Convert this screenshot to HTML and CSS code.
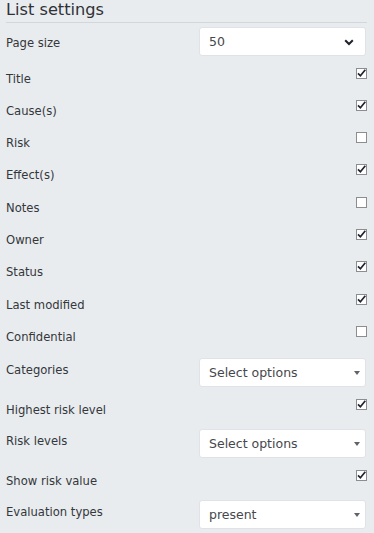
FILE: index.html
```html
<!DOCTYPE html>
<html>
<head>
<meta charset="utf-8">
<link rel="stylesheet" href="styles.css">
</head>
<body>
<div class="panel">
  <h2 class="title">List settings</h2>

  <div class="row row-select row-first">
    <span class="label label-page">Page size</span>
    <div class="select">
      <span class="select-text">50</span>
      <svg class="chevron" width="10" height="7" viewBox="0 0 10 7"><path d="M1.2 1.3 L5 5 L8.8 1.3" fill="none" stroke="#1f2329" stroke-width="2"/></svg>
    </div>
  </div>

  <div class="row row-check"><span class="label">Title</span><span class="cb on"><svg viewBox="0 0 11 11"><path d="M2 5.3 L4.4 7.8 L9.3 1.8" fill="none" stroke="#1d2430" stroke-width="1.7"/></svg></span></div>
  <div class="row row-check"><span class="label">Cause(s)</span><span class="cb on"><svg viewBox="0 0 11 11"><path d="M2 5.3 L4.4 7.8 L9.3 1.8" fill="none" stroke="#1d2430" stroke-width="1.7"/></svg></span></div>
  <div class="row row-check"><span class="label">Risk</span><span class="cb"></span></div>
  <div class="row row-check"><span class="label">Effect(s)</span><span class="cb on"><svg viewBox="0 0 11 11"><path d="M2 5.3 L4.4 7.8 L9.3 1.8" fill="none" stroke="#1d2430" stroke-width="1.7"/></svg></span></div>
  <div class="row row-check"><span class="label">Notes</span><span class="cb"></span></div>
  <div class="row row-check"><span class="label">Owner</span><span class="cb on"><svg viewBox="0 0 11 11"><path d="M2 5.3 L4.4 7.8 L9.3 1.8" fill="none" stroke="#1d2430" stroke-width="1.7"/></svg></span></div>
  <div class="row row-check"><span class="label">Status</span><span class="cb on"><svg viewBox="0 0 11 11"><path d="M2 5.3 L4.4 7.8 L9.3 1.8" fill="none" stroke="#1d2430" stroke-width="1.7"/></svg></span></div>
  <div class="row row-check"><span class="label">Last modified</span><span class="cb on"><svg viewBox="0 0 11 11"><path d="M2 5.3 L4.4 7.8 L9.3 1.8" fill="none" stroke="#1d2430" stroke-width="1.7"/></svg></span></div>
  <div class="row row-check"><span class="label">Confidential</span><span class="cb"></span></div>

  <div class="row row-select">
    <span class="label">Categories</span>
    <div class="select">
      <span class="select-text">Select options</span>
      <span class="caret"></span>
    </div>
  </div>

  <div class="row row-check tight"><span class="label">Highest risk level</span><span class="cb on"><svg viewBox="0 0 11 11"><path d="M2 5.3 L4.4 7.8 L9.3 1.8" fill="none" stroke="#1d2430" stroke-width="1.7"/></svg></span></div>

  <div class="row row-select">
    <span class="label">Risk levels</span>
    <div class="select">
      <span class="select-text">Select options</span>
      <span class="caret"></span>
    </div>
  </div>

  <div class="row row-check tight"><span class="label">Show risk value</span><span class="cb on"><svg viewBox="0 0 11 11"><path d="M2 5.3 L4.4 7.8 L9.3 1.8" fill="none" stroke="#1d2430" stroke-width="1.7"/></svg></span></div>

  <div class="row row-select">
    <span class="label">Evaluation types</span>
    <div class="select">
      <span class="select-text">present</span>
      <span class="caret"></span>
    </div>
  </div>
</div>
</body>
</html>
```

FILE: styles.css
```css
html, body {
  margin: 0;
  padding: 0;
  background: #e9ecef;
}

body {
  font-family: "DejaVu Sans", Verdana, sans-serif;
  color: #333;
}

.panel {
  padding: 0 7px 0 6px;
}

.title {
  margin: 0;
  font-size: 16.2px;
  line-height: 20px;
  font-weight: normal;
  color: #2f3237;
  padding-bottom: 2px;
  border-bottom: 1px solid #d4d7da;
}

.row {
  display: flex;
  justify-content: space-between;
  align-items: flex-start;
  box-sizing: border-box;
}

.row-first {
  margin-top: 4px;
  height: 38px;
}

.row-check {
  height: 32.3px;
}

.row-check.tight {
  height: 30.5px;
}

.row-select {
  height: 40.5px;
}

.label {
  font-size: 11.6px;
  line-height: 14px;
  color: #34373b;
  padding-top: 4px;
}

.row-select .label {
  padding-top: 5px;
}

.row-select .label-page {
  padding-top: 9px;
}

.cb {
  width: 11px;
  height: 11px;
  box-sizing: border-box;
  border: 1px solid #8c8d8f;
  background: #fff;
  display: block;
  position: relative;
}

.cb svg {
  position: absolute;
  left: -1px;
  top: -1px;
  width: 11px;
  height: 11px;
}

.select {
  width: 167px;
  height: 29px;
  margin-right: 1px;
  box-sizing: border-box;
  background: #fff;
  border: 1px solid #dfe2e6;
  border-radius: 3px;
  display: flex;
  align-items: center;
  justify-content: space-between;
  padding: 0 11px 0 9px;
}

.select-text {
  font-size: 12.5px;
  color: #45484c;
}

.chevron {
  display: block;
  margin-right: 0;
  margin-top: 1px;
}

.caret {
  width: 0;
  height: 0;
  border-left: 3.5px solid transparent;
  border-right: 3.5px solid transparent;
  border-top: 4px solid #606468;
  margin-right: -6px;
  margin-top: 1px;
}
```
